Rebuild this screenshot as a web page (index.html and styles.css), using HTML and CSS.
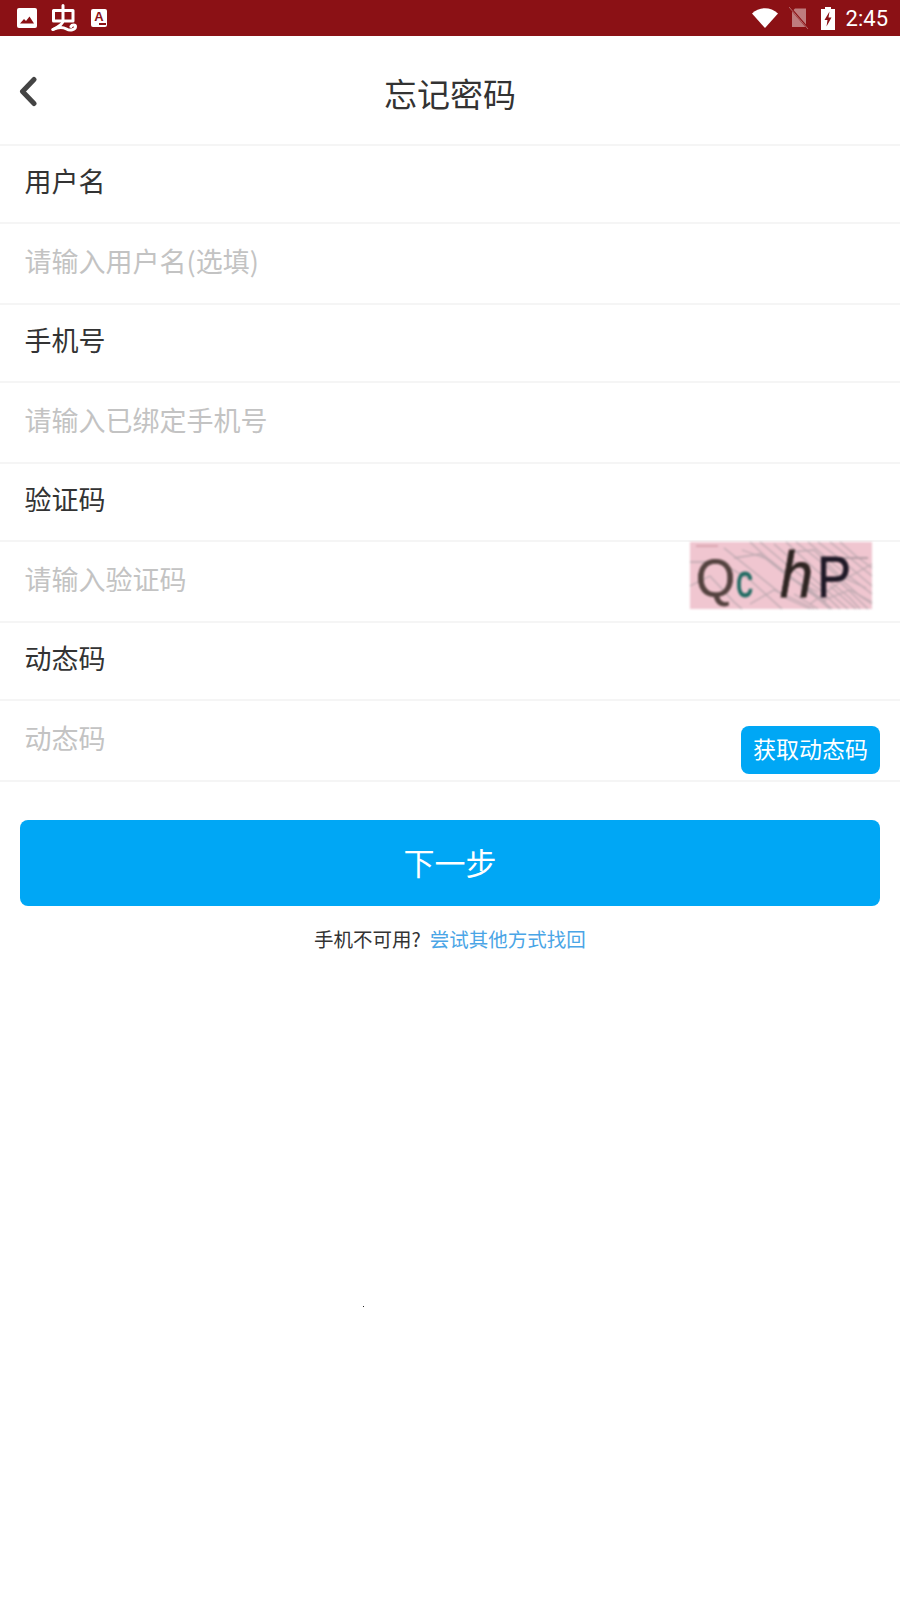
FILE: index.html
```html
<!DOCTYPE html>
<html>
<head>
    <meta charset="UTF-8">
    <title>忘记密码</title>
    <link rel="stylesheet" href="styles.css">
</head>
<body>
<div class="status-bar">
    <div class="status-left">
        <svg class="icon-image" width="20" height="20" viewBox="0 0 20 20">
            <rect width="20" height="20" rx="2" fill="#fff"/>
            <path d="M3 15.500 L7 11 L9 13 L12.500 8.500 L17 15.500 Z" fill="#8b1115"/>
        </svg>
        <svg class="icon-bug" width="26" height="28" viewBox="0 0 26 28" fill="none" stroke="#fff" stroke-width="3" stroke-linecap="round" stroke-linejoin="round">
            <path d="M2.500 6.500 H22 V17 H2.500 Z"/>
            <path d="M12 1.500 V17 C12 20 8 22.500 2 25.500"/>
            <path d="M2 25.500 C8 22.500 12 23 15.500 25 C19 27 24.500 26 24.500 22.500 C24.500 20.500 21 20.500 20 22.500"/>
        </svg>
        <div class="icon-a"><span>A</span></div>
    </div>
    <div class="status-right">
        <svg class="icon-wifi" width="26" height="20" viewBox="0 0 26 20">
            <path d="M0 5.500 C7.500 -1.500 18.500 -1.500 26 5.500 L13 20 Z" fill="#fff"/>
        </svg>
        <svg class="icon-sim" width="20" height="22" viewBox="0 0 20 22">
            <path d="M6 1.500 H17 V20 H3 V4.500 Z" fill="#fff" opacity="0.45"/>
            <path d="M1 0.500 L19 21.500" stroke="#8b1115" stroke-width="2"/>
            <path d="M0 0 L19 22" stroke="#fff" stroke-width="1" opacity="0.35"/>
        </svg>
        <svg class="icon-battery" width="14" height="23" viewBox="0 0 14 23">
            <path d="M4 0 H10 V2 H14 V23 H0 V2 H4 Z" fill="#fff"/>
            <path d="M8.500 4.500 L3.500 13 H6.500 L5.500 19.500 L10.500 10.500 H7.500 Z" fill="#8b1115"/>
        </svg>
        <span class="status-time">2:45</span>
    </div>
</div>

<div class="header">
    <svg class="back" width="20" height="32" viewBox="0 0 20 32" fill="none" stroke="#444" stroke-width="5" stroke-linecap="round" stroke-linejoin="round">
        <path d="M16 3.500 L4.500 15.500 L16 27.500"/>
    </svg>
    <div class="title">忘记密码</div>
</div>

<div class="form">
    <div class="row label-row">用户名</div>
    <div class="row input-row">请输入用户名(选填)</div>
    <div class="row label-row">手机号</div>
    <div class="row input-row">请输入已绑定手机号</div>
    <div class="row label-row">验证码</div>
    <div class="row input-row input-row-captcha">
        <span>请输入验证码</span>
        <svg class="captcha" width="182" height="67" viewBox="0 0 182 67">
            <rect width="182" height="67" fill="#f0c6d0"/>
            <g fill="none" stroke="#a39aa0" stroke-width="1.300" opacity="0.65">
                <path d="M0 20 L30 20 L60 38 L92 67"/>
                <path d="M34 6 L64 30 L96 56 L120 67"/>
                <path d="M60 0 L88 26 L122 52 L140 67"/>
                <path d="M70 0 L96 22 L130 48 L150 67"/>
                <path d="M84 2 L116 30 L150 60 L158 67"/>
                <path d="M96 0 L126 28 L160 56 L170 67"/>
                <path d="M106 0 L136 24 L170 54 L182 62"/>
                <path d="M118 0 L146 24 L182 52"/>
                <path d="M128 0 L154 20 L182 44"/>
                <path d="M140 0 L160 16 L182 34"/>
                <path d="M150 0 L166 14 L182 26"/>
                <path d="M0 44 L20 34 L44 60 L52 67"/>
                <path d="M44 16 L70 12 L100 36 L128 50"/>
                <path d="M52 8 L80 18 L110 42 L136 60"/>
                <path d="M120 62 L150 40 L182 22"/>
                <path d="M60 62 L84 48 L110 60 L124 67"/>
                <path d="M100 10 L124 8 L150 34 L176 46"/>
                <path d="M110 46 L134 58 L160 48 L182 60"/>
                <path d="M104 52 L128 67 M116 44 L142 67 M140 44 L166 67 M150 40 L178 67"/>
            </g>
            <path d="M6 4 H28" stroke="#d9a5b0" stroke-width="2"/>
            <path d="M150 16 H178" stroke="#b8a0a8" stroke-width="2"/>
            <text x="6" y="54" textLength="39" lengthAdjust="spacingAndGlyphs" class="cap-q">Q</text>
            <text x="46" y="55" textLength="17" lengthAdjust="spacingAndGlyphs" class="cap-c">c</text>
            <text x="90" y="55" textLength="33" lengthAdjust="spacingAndGlyphs" class="cap-h">h</text>
            <text x="127" y="55" textLength="34" lengthAdjust="spacingAndGlyphs" class="cap-p">P</text>
        </svg>
    </div>
    <div class="row label-row">动态码</div>
    <div class="row input-row input-row-code">
        <span>动态码</span>
        <div class="code-btn">获取动态码</div>
    </div>
</div>

<div class="next-btn">下一步</div>
<div class="other-way">手机不可用?<span class="link">尝试其他方式找回</span></div>
<div class="speck"></div>
</body>
</html>
```

FILE: styles.css
```css
body {
    margin: 0;
    height: 1600px;
    position: relative;
    overflow: hidden;
    background-color: #fff;
    color: #333;
    font-family: "Noto Sans CJK SC", "Noto Sans", sans-serif;
}
.status-bar {
    height: 36px;
    background-color: #8b1115;
    display: flex;
    justify-content: space-between;
    align-items: center;
    padding: 0 12px 0 17px;
}
.status-left {
    display: flex;
    align-items: center;
}
.icon-bug {
    margin-left: 14px;
}
.icon-a {
    margin-left: 14px;
    width: 16px;
    height: 18px;
    position: relative;
    border-radius: 2px;
    background-color: #fff;
    color: #8b1115;
    font-family: "Liberation Sans", sans-serif;
    font-size: 13px;
    font-weight: bold;
    line-height: 16px;
    text-align: center;
}
.icon-a::after {
    content: "";
    position: absolute;
    right: 1px;
    bottom: 2px;
    width: 7px;
    height: 2px;
    background-color: #8b1115;
}
.status-right {
    display: flex;
    align-items: center;
}
.icon-sim {
    margin-left: 11px;
}
.icon-battery {
    margin-left: 12px;
}
.status-time {
    margin-left: 11px;
    color: #fff;
    font-family: Roboto, sans-serif;
    font-size: 22px;
}
.header {
    height: 108px;
    position: relative;
    display: flex;
    justify-content: center;
    align-items: center;
}
.back {
    position: absolute;
    left: 18px;
    top: 40px;
}
.title {
    font-size: 33px;
    color: #333;
    margin-top: 6px;
}
.form {
    display: flex;
    flex-direction: column;
}
.row {
    box-sizing: border-box;
    border-top: 2px solid #f5f5f5;
    padding-left: 24.500px;
    font-size: 27px;
    line-height: 46px;
    display: flex;
}
.label-row {
    height: 78px;
    padding-top: 12px;
    color: #333;
}
.input-row {
    height: 81px;
    padding-top: 14px;
    color: #c3c3c3;
    justify-content: space-between;
}
.input-row-captcha {
    padding-right: 28px;
}
.captcha {
    margin-top: -14px;
    filter: blur(0.8px);
    overflow: visible;
}
.cap-q, .cap-c, .cap-h, .cap-p {
    font-family: "Liberation Sans", sans-serif;
    stroke-width: 0.800;
}
.cap-q {
    font-size: 52px;
    fill: #53423f;
    stroke: #53423f;
}
.cap-c {
    font-size: 46px;
    fill: #1f6b62;
    stroke: #1f6b62;
}
.cap-h {
    font-size: 64px;
    font-style: italic;
    fill: #2e2522;
    stroke: #2e2522;
}
.cap-p {
    font-size: 58px;
    fill: #1e1826;
    stroke: #1e1826;
}
.input-row-code {
    padding-right: 20px;
    height: 83px;
    border-bottom: 2px solid #f5f5f5;
}
.code-btn {
    width: 139px;
    height: 48px;
    margin-top: 11px;
    border-radius: 8px;
    background-color: #00a7f5;
    color: #fff;
    font-size: 23px;
    line-height: 45px;
    text-align: center;
}
.next-btn {
    margin: 38px 20px 0;
    height: 86px;
    border-radius: 8px;
    background-color: #00a7f5;
    color: #fff;
    font-size: 31px;
    line-height: 84px;
    text-align: center;
}
.other-way {
    margin-top: 18px;
    text-align: center;
    font-size: 19.500px;
    line-height: 30px;
    color: #333;
}
.link {
    margin-left: 9px;
    color: #4aa5e6;
}
.speck {
    position: absolute;
    left: 363px;
    top: 1306px;
    width: 1px;
    height: 1px;
    background-color: #222;
}
```
